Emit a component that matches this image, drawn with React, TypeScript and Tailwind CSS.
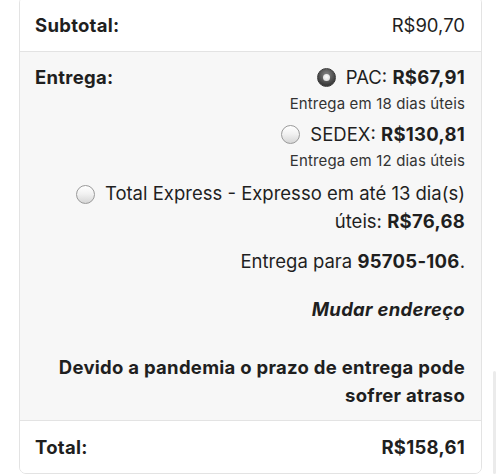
import React from "react";

function Radio({ checked }: { checked?: boolean }) {
  if (checked) {
    return (
      <span className="inline-flex h-[19px] w-[19px] shrink-0 items-center justify-center rounded-full border border-[#3a3a3a] bg-[radial-gradient(circle_at_50%_35%,#8a8a8a,#3d3d3d_70%)]">
        <span className="h-[7px] w-[7px] rounded-full bg-[radial-gradient(circle_at_50%_40%,#ffffff,#d4d4d4)]" />
      </span>
    );
  }
  return (
    <span className="inline-block h-[19px] w-[19px] shrink-0 rounded-full border border-[#9a9a9a] bg-[linear-gradient(180deg,#ffffff_0%,#f2f2f2_45%,#d6d6d6_100%)]" />
  );
}

export default function App() {
  return (
    <div
      className="relative h-[474px] w-[500px] overflow-hidden bg-white text-[#1f1f1f]"
      style={{ fontFamily: "Inter, 'Noto Sans', sans-serif" }}
    >
      <div className="-mt-[4px] ml-[19px] w-[463px] overflow-hidden rounded-[7px] border border-[#e3e3e3]">
        <div className="flex h-[54px] items-end justify-between bg-white px-[15px] pb-[12px] pr-[16px] text-[18.5px] leading-[28px]">
          <span className="font-bold tracking-[0.015em]">Subtotal:</span>
          <span>R$90,70</span>
        </div>
        <div className="border-t border-[#e3e3e3] bg-[#f7f7f7] px-[15px] pr-[16px] pb-[11px] pt-[11px]">
          <div className="flex justify-between text-[18.5px] leading-[28px]">
            <span className="font-bold tracking-[0.015em]">Entrega:</span>
            <div className="flex flex-col items-end">
              <div className="flex items-center gap-[10px]">
                <Radio checked />
                <span>
                  PAC: <b className="tracking-[0.015em]">R$67,91</b>
                </span>
              </div>
              <div className="mt-[3px] text-[15px] tracking-[0.01em] leading-[20px] text-[#333]">Entrega em 18 dias úteis</div>
              <div className="mt-[6px] flex items-center gap-[10px]">
                <Radio />
                <span>
                  SEDEX: <b className="tracking-[0.015em]">R$130,81</b>
                </span>
              </div>
              <div className="mt-[3px] text-[15px] tracking-[0.01em] leading-[20px] text-[#333]">Entrega em 12 dias úteis</div>
            </div>
          </div>
          <div className="mt-[8px] flex justify-end gap-[10px] text-[18.5px] leading-[28px]">
            <span className="mt-[4px]">
              <Radio />
            </span>
            <span className="text-right">
              Total Express - Expresso em até 13 dia(s)
              <br />
              úteis: <b className="tracking-[0.015em]">R$76,68</b>
            </span>
          </div>
          <div className="mt-[12px] text-right text-[18.5px] leading-[28px]">
            Entrega para <b className="tracking-[0.015em]">95705-106</b>.
          </div>
          <div className="mt-[20px] text-right text-[18.5px] font-bold italic tracking-[0.015em] leading-[28px]">Mudar endereço</div>
          <div className="mt-[30px] text-right text-[18.5px] font-bold tracking-[0.015em] leading-[28px]">
            Devido a pandemia o prazo de entrega pode
            <br />
            sofrer atraso
          </div>
        </div>
        <div className="flex h-[53px] items-center justify-between border-t border-[#e3e3e3] bg-white px-[15px] pr-[16px] text-[18.5px] font-bold tracking-[0.015em] leading-[28px]">
          <span>Total:</span>
          <span>R$158,61</span>
        </div>
      </div>
      <div className="absolute left-[493px] top-[371px] h-[103px] w-[3px] rounded-full bg-[#ebebeb]" />
    </div>
  );
}
